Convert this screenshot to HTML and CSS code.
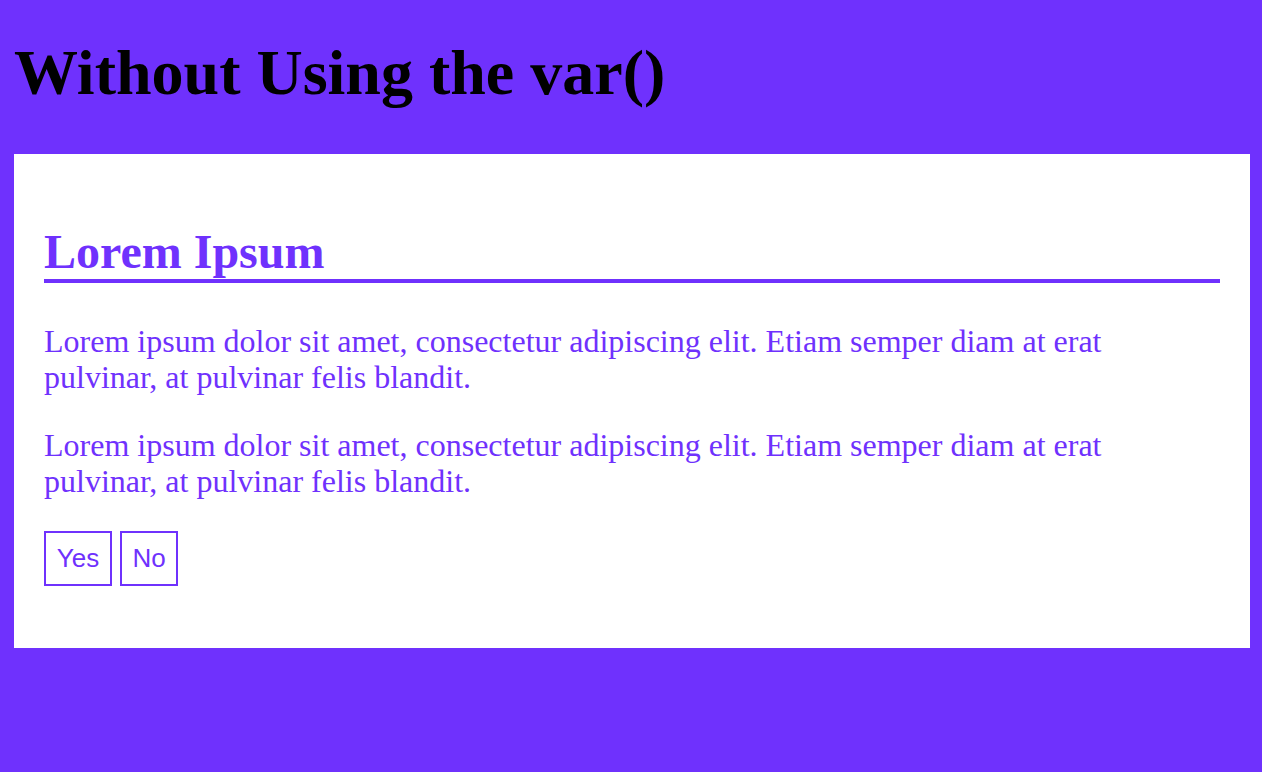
FILE: index.html
```html
<html lang="en">
<head>
    <meta charset="UTF-8">
    <meta name="viewport" content="width=device-width, initial-scale=1.0">
    <title>Without Using the var()</title>
    <link rel="stylesheet" href="styles.css">
</head>
<body>
    <h1>Without Using the var()</h1>
    <div class="card">
        <h2>Lorem Ipsum</h2>
        <p>Lorem ipsum dolor sit amet, consectetur adipiscing elit. Etiam semper diam at erat pulvinar, at pulvinar felis blandit.</p>
        <p>Lorem ipsum dolor sit amet, consectetur adipiscing elit. Etiam semper diam at erat pulvinar, at pulvinar felis blandit.</p>
        <div class="actions">
            <button>Yes</button>
            <button>No</button>
        </div>
    </div>
</body>
</html>
```

FILE: styles.css
```css
body {
    font-family: "Liberation Serif", "Times New Roman", serif;
    font-size: 32px;
    line-height: 36px;
    margin: 0;
    padding: 0 12px 0 14px;
    background-color: #6f31fd;
    min-height: 772px;
    box-sizing: border-box;
}
h1 {
    font-size: 64px;
    line-height: 74px;
    margin: 36px 0 44px;
    color: #000;
}
.card {
    background-color: white;
    padding: 30px;
    color: #6f31fd;
}
h2 {
    font-size: 48px;
    line-height: 55px;
    margin: 40px 0;
    border-bottom: 4px solid #6f31fd;
}
p {
    margin: 32px 0;
}
.actions {
    display: flex;
    gap: 8px;
    margin-bottom: 32px;
}
button {
    font-family: "Liberation Sans", Arial, sans-serif;
    font-size: 26px;
    line-height: 31px;
    padding: 10px 10px;
    min-width: 68px;
    background: white;
    color: #6f31fd;
    border: 2px solid #6f31fd;
    border-radius: 0;
    cursor: pointer;
}
button + button {
    min-width: 58px;
}
```
